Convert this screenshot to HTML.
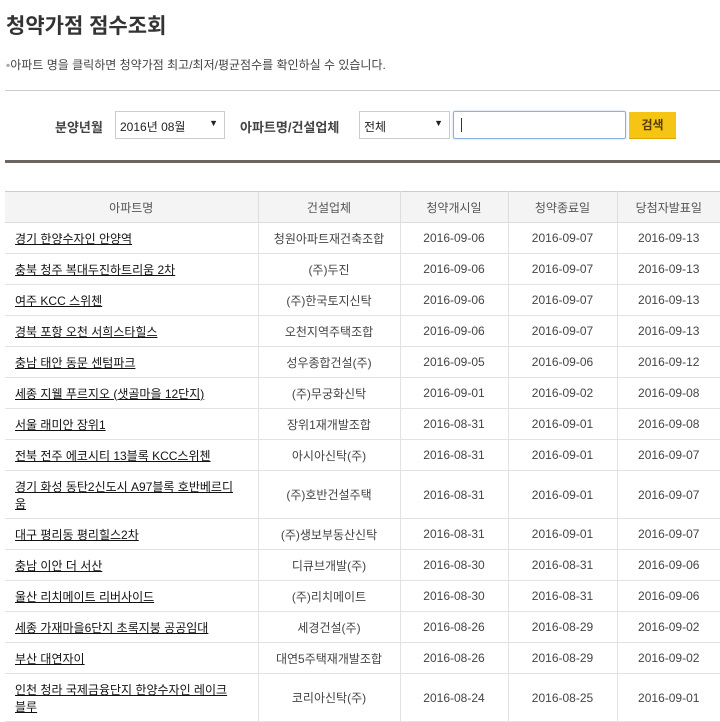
<!DOCTYPE html>
<html><head><meta charset="utf-8"><style>
*{margin:0;padding:0;box-sizing:border-box}
body{width:720px;height:722px;overflow:hidden;background:#fff;font-family:"Liberation Sans","Noto Sans CJK KR","NanumGothic",sans-serif;color:#333;position:relative}
.a{position:absolute}
h1{position:absolute;left:6px;top:10px;font-size:21px;font-weight:bold;color:#333;letter-spacing:0px}
.note{left:6px;top:56px;font-size:12px;color:#444}
.label{font-size:13px;font-weight:bold;color:#444;top:117px}
.sel{border:1px solid #ccc;height:28px;top:111px;font-size:12px;color:#222;padding:6px 4px;background:#fff}
.sel span{position:absolute;right:6px;top:6px;font-size:9px}
table{position:absolute;left:5px;top:191px;width:715px;border-collapse:collapse;font-size:12px}
th{background:#f4f4f4;font-weight:normal;color:#555;height:31px;border:1px solid #ddd;border-top:1px solid #ccc}
td{height:31px;border:1px solid #e2e2e2;text-align:center;color:#444}
td:first-child{text-align:left;padding-left:10px;color:#111;text-decoration:underline}
tr.t td{height:48px}
th:last-child,td:last-child{border-right:none}
th:first-child,td:first-child{border-left:none}
</style></head><body>
<h1>청약가점 점수조회</h1>
<div class="a note"><span style="color:#aaa">▪</span>아파트 명을 클릭하면 청약가점 최고/최저/평균점수를 확인하실 수 있습니다.</div>
<div class="a" style="left:5px;top:90px;width:715px;height:1px;background:#ccc"></div>
<div class="a label" style="left:55px">분양년월</div>
<div class="a sel" style="left:115px;width:110px">2016년 08월<span>▼</span></div>
<div class="a label" style="left:240px">아파트명/건설업체</div>
<div class="a sel" style="left:359px;width:91px">전체<span>▼</span></div>
<div class="a" style="left:453px;top:111px;width:173px;height:28px;border:1px solid #8eb0dd;border-radius:2px;box-shadow:0 0 2px #b8cdea"><div style="position:absolute;left:7px;top:6px;width:1px;height:14px;background:#333"></div></div>
<div class="a" style="left:629px;top:112px;width:47px;height:27px;background:#f6c412;border-bottom:1px solid #d9a800;font-size:12px;font-weight:bold;color:#553d00;text-align:center;line-height:26px">검색</div>
<div class="a" style="left:5px;top:160px;width:715px;height:3px;background:#6b6461"></div>
<table>
<colgroup><col style="width:253px"><col style="width:142px"><col style="width:108px"><col style="width:109px"><col></colgroup>
<tr><th>아파트명</th><th>건설업체</th><th>청약개시일</th><th>청약종료일</th><th>당첨자발표일</th></tr>
<tr><td>경기 한양수자인 안양역</td><td>청원아파트재건축조합</td><td>2016-09-06</td><td>2016-09-07</td><td>2016-09-13</td></tr>
<tr><td>충북 청주 복대두진하트리움 2차</td><td>(주)두진</td><td>2016-09-06</td><td>2016-09-07</td><td>2016-09-13</td></tr>
<tr><td>여주 KCC 스위첸</td><td>(주)한국토지신탁</td><td>2016-09-06</td><td>2016-09-07</td><td>2016-09-13</td></tr>
<tr><td>경북 포항 오천 서희스타힐스</td><td>오천지역주택조합</td><td>2016-09-06</td><td>2016-09-07</td><td>2016-09-13</td></tr>
<tr><td>충남 태안 동문 센텀파크</td><td>성우종합건설(주)</td><td>2016-09-05</td><td>2016-09-06</td><td>2016-09-12</td></tr>
<tr><td>세종 지웰 푸르지오 (샛골마을 12단지)</td><td>(주)무궁화신탁</td><td>2016-09-01</td><td>2016-09-02</td><td>2016-09-08</td></tr>
<tr><td>서울 래미안 장위1</td><td>장위1재개발조합</td><td>2016-08-31</td><td>2016-09-01</td><td>2016-09-08</td></tr>
<tr><td>전북 전주 에코시티 13블록 KCC스위첸</td><td>아시아신탁(주)</td><td>2016-08-31</td><td>2016-09-01</td><td>2016-09-07</td></tr>
<tr class="t"><td>경기 화성 동탄2신도시 A97블록 호반베르디<br>움</td><td>(주)호반건설주택</td><td>2016-08-31</td><td>2016-09-01</td><td>2016-09-07</td></tr>
<tr><td>대구 평리동 평리힐스2차</td><td>(주)생보부동산신탁</td><td>2016-08-31</td><td>2016-09-01</td><td>2016-09-07</td></tr>
<tr><td>충남 이안 더 서산</td><td>디큐브개발(주)</td><td>2016-08-30</td><td>2016-08-31</td><td>2016-09-06</td></tr>
<tr><td>울산 리치메이트 리버사이드</td><td>(주)리치메이트</td><td>2016-08-30</td><td>2016-08-31</td><td>2016-09-06</td></tr>
<tr><td>세종 가재마을6단지 초록지붕 공공임대</td><td>세경건설(주)</td><td>2016-08-26</td><td>2016-08-29</td><td>2016-09-02</td></tr>
<tr><td>부산 대연자이</td><td>대연5주택재개발조합</td><td>2016-08-26</td><td>2016-08-29</td><td>2016-09-02</td></tr>
<tr class="t"><td>인천 청라 국제금융단지 한양수자인 레이크<br>블루</td><td>코리아신탁(주)</td><td>2016-08-24</td><td>2016-08-25</td><td>2016-09-01</td></tr>
</table>
</body></html>
